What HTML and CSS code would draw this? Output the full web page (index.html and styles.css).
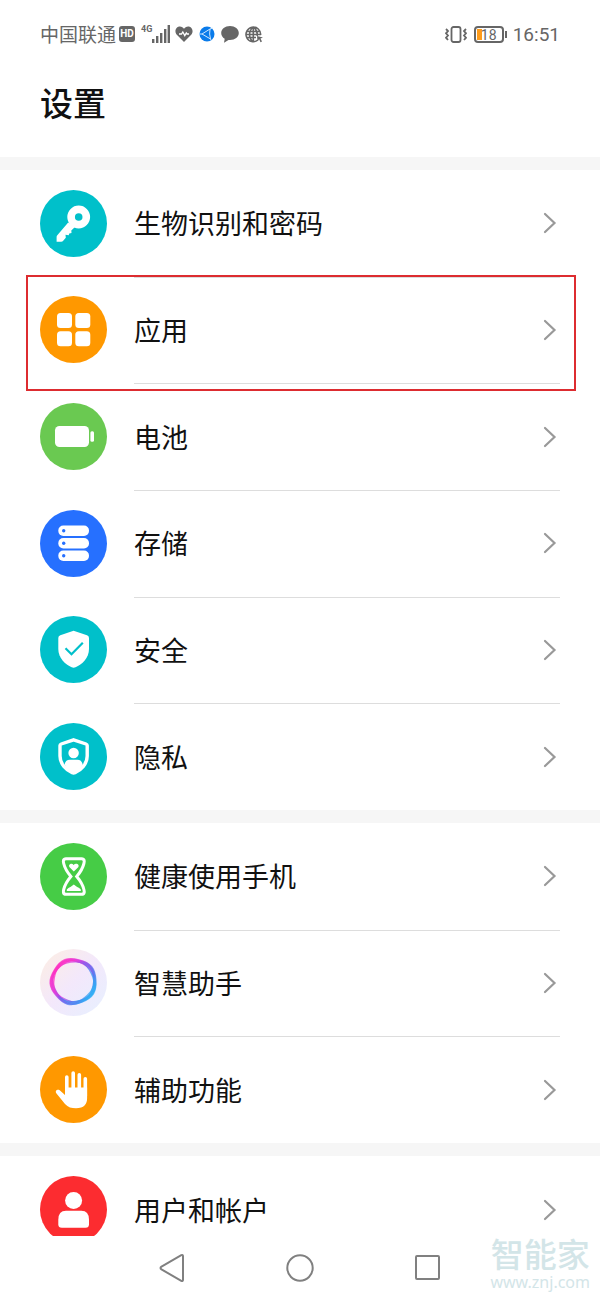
FILE: index.html
```
<!DOCTYPE html>
<html lang="zh-CN">
<head>
  <meta charset="UTF-8">
  <meta name="viewport" content="width=device-width, initial-scale=1">
  <title>设置</title>
  <link rel="stylesheet" href="styles.css">
</head>
<body>

  <svg class="defs" aria-hidden="true">
    <symbol id="chevron" viewBox="0 0 14 24">
      <path d="M2 3l9.500 9L2 21" fill="none" stroke="#999" stroke-width="2.200" stroke-linecap="round"/>
    </symbol>
  </svg>

  <div class="status-bar">
    <span class="carrier">中国联通</span>
    <span class="hd">HD</span>
    <span class="signal">
      <span class="network">4G</span>
      <svg width="18" height="18" viewBox="0 0 18 18" fill="#666">
        <path d="M0 14h2.400v4H0zM4 11h2.400v7H4zM8 8h2.400v10H8zM12 4h2.400v14H12zM15.600 0H18v18h-2.400z"/>
      </svg>
    </span>
    <svg class="heart" width="18" height="16" viewBox="0 0 18 16">
      <path d="M9 16L1.800 8.800C-1 5.600.8.500 4.800.5 6.800.5 8.200 1.500 9 2.800 9.800 1.500 11.200.5 13.200.5c4 0 5.800 5.100 3 8.300z" fill="#666"/>
      <path d="M4 8h2.500l1.300-2 2 3.600L11.300 7l.8 1H14" fill="none" stroke="#fff" stroke-width="1.300"/>
    </svg>
    <svg class="browser" width="16" height="16" viewBox="0 0 16 16">
      <circle cx="8" cy="8" r="7.500" fill="#0a7bea"/>
      <path d="M3 8l8-5q-1 5 .5 10zM11 3l2.500-1M11.500 13l1 1.500M3 8H.5" fill="none" stroke="#cfe8ff" stroke-width="1"/>
    </svg>
    <svg class="bubble" width="18" height="17" viewBox="0 0 18 17">
      <path d="M9 0c5 0 8.800 3 8.800 7S14 14 9 14l-1.500-.1L3 16.800l.7-4C1.500 11.500.2 9.500.2 7 .2 3 4 0 9 0z" fill="#666"/>
    </svg>
    <svg class="globe" width="18" height="17" viewBox="0 0 18 17" fill="none" stroke="#666" stroke-width="1.600">
      <path d="M13 14A7.300 7.300 0 1 1 15.600 9M8.300 1v15M1 5.500h14.200M1 11.500h10M.5 8.500H16M8.300 1c-5 4-5 11 0 15M8.300 1c3.500 3 4.500 6 3.800 9"/>
      <path d="M12 10l6 1.500-2.500 1 1.500 3-1.500.8-1.300-3-1.700 1.700z" fill="#666" stroke="none"/>
    </svg>
    <span class="spacer"></span>
    <svg class="vibrate" width="22" height="17" viewBox="0 0 22 17" fill="none" stroke="#666" stroke-width="1.800">
      <rect x="6.500" y="1" width="9" height="15" rx="2"/>
      <path d="M1 3l2 2-2 2.300 2 2.200-2 2.200 2 2.300M21 3l-2 2 2 2.300-2 2.200 2 2.200-2 2.300"/>
    </svg>
    <span class="battery">18</span>
    <time class="clock">16:51</time>
  </div>

  <header>
    <h1>设置</h1>
  </header>

  <main>
    <nav class="group">
      <a class="row" href="#biometrics">
        <svg class="icon" viewBox="0 0 67 67">
          <circle cx="33.500" cy="33.500" r="33.500" fill="#00c0ca"/>
          <circle cx="38.700" cy="27" r="7.600" fill="none" stroke="#fff" stroke-width="7.600"/>
          <path d="M28.200 32.500L17.300 45.200q-.7.700-.7 1.800v4.700h4.600q1.300 0 2-1l2.600-3-.3-3 3.200.5.600-1.800 2.200-.4-.2-2.500 4.200-4z" fill="#fff"/>
        </svg>
        <span class="label">生物识别和密码</span>
        <svg class="chevron"><use href="#chevron"/></svg>
      </a>
      <a class="row highlighted" href="#apps">
        <svg class="icon" viewBox="0 0 67 67">
          <circle cx="33.500" cy="33.500" r="33.500" fill="#ff9800"/>
          <g fill="#fff">
            <rect x="17" y="17" width="15" height="15" rx="3.500"/>
            <rect x="35.300" y="17" width="15" height="15" rx="3.500"/>
            <rect x="17" y="35.300" width="15" height="15" rx="3.500"/>
            <rect x="35.300" y="35.300" width="15" height="15" rx="3.500"/>
          </g>
        </svg>
        <span class="label">应用</span>
        <svg class="chevron"><use href="#chevron"/></svg>
      </a>
      <a class="row" href="#battery">
        <svg class="icon" viewBox="0 0 67 67">
          <circle cx="33.500" cy="33.500" r="33.500" fill="#6ac951"/>
          <rect x="15" y="23" width="34" height="21" rx="4.500" fill="#fff"/>
          <rect x="50.400" y="28.300" width="3.600" height="10.500" rx="1.500" fill="#fff"/>
        </svg>
        <span class="label">电池</span>
        <svg class="chevron"><use href="#chevron"/></svg>
      </a>
      <a class="row" href="#storage">
        <svg class="icon" viewBox="0 0 67 67">
          <circle cx="33.500" cy="33.500" r="33.500" fill="#2670ff"/>
          <g fill="#fff">
            <rect x="18.300" y="15.600" width="30.700" height="10.400" rx="5"/>
            <rect x="18.300" y="28.100" width="30.700" height="10.400" rx="5"/>
            <rect x="18.300" y="40.600" width="30.700" height="10.400" rx="5"/>
          </g>
          <g fill="#2670ff">
            <circle cx="23.700" cy="20.800" r="1.700"/>
            <circle cx="23.700" cy="33.300" r="1.700"/>
            <circle cx="23.700" cy="45.800" r="1.700"/>
          </g>
        </svg>
        <span class="label">存储</span>
        <svg class="chevron"><use href="#chevron"/></svg>
      </a>
      <a class="row" href="#security">
        <svg class="icon" viewBox="0 0 67 67">
          <circle cx="33.500" cy="33.500" r="33.500" fill="#00c0ca"/>
          <path d="M33.600 14.800L47 19.200q2 .7 2 2.800v11c0 9-7 15.500-13.500 18.300q-1.900.8-3.800 0C25.300 48.500 18.300 42 18.300 33V22q0-2.100 2-2.800z" fill="#fff"/>
          <path d="M25.500 32.300l6 6 11.300-11.500" fill="none" stroke="#00c0ca" stroke-width="2.200"/>
        </svg>
        <span class="label">安全</span>
        <svg class="chevron"><use href="#chevron"/></svg>
      </a>
      <a class="row" href="#privacy">
        <svg class="icon" viewBox="0 0 67 67">
          <circle cx="33.500" cy="33.500" r="33.500" fill="#00c0ca"/>
          <path d="M33.600 16.800L46 21q1.200.4 1.200 1.600V33c0 8-6.200 14-12.200 16.700q-1.400.6-2.800 0C26.200 47 20 41 20 33V22.600q0-1.200 1.200-1.600z" fill="none" stroke="#fff" stroke-width="3.400"/>
          <circle cx="33.600" cy="30" r="5.200" fill="#fff"/>
          <path d="M24.500 41.500q1-4.800 5.300-4.800h7.600q4.300 0 5.300 4.800-3.300 6-9.100 8.700-5.800-2.700-9.100-8.700z" fill="#fff"/>
        </svg>
        <span class="label">隐私</span>
        <svg class="chevron"><use href="#chevron"/></svg>
      </a>
    </nav>

    <nav class="group">
      <a class="row" href="#balance">
        <svg class="icon" viewBox="0 0 67 67">
          <circle cx="33.500" cy="33.500" r="33.500" fill="#46cc46"/>
          <path d="M26 15.700h15.600c3 0 2.900 2.500 2.300 4.800-1.200 5-4.200 9.500-7.200 13 3 3.500 6 8 7.200 13 .6 2.300.7 4.800-2.300 4.800H26c-3 0-2.900-2.500-2.300-4.800 1.200-5 4.200-9.500 7.200-13-3-3.500-6-8-7.200-13-.6-2.300-.7-4.800 2.300-4.800z" fill="none" stroke="#fff" stroke-width="3"/>
          <path d="M33.800 28.500l-4.200-4.200c-2-2.500 2-5 4-2.400 2.200-2.600 6.500-.4 4.600 2.300zM26.800 48v-1.500q1.200-1.800 4-2.800l3-2.200 3 2.200q2.800 1 4 2.800V48z" fill="#fff"/>
        </svg>
        <span class="label">健康使用手机</span>
        <svg class="chevron"><use href="#chevron"/></svg>
      </a>
      <a class="row" href="#assistant">
        <svg class="icon" viewBox="0 0 67 67">
          <defs>
            <linearGradient id="disc" x1="0" y1="0" x2="1" y2="1">
              <stop offset="0" stop-color="#fdeee2"/>
              <stop offset=".5" stop-color="#f3e8fb"/>
              <stop offset="1" stop-color="#e6f0ff"/>
            </linearGradient>
            <linearGradient id="ring" x1="0.100" y1="0.200" x2="0.900" y2="0.900">
              <stop offset="0" stop-color="#ff2fc0"/>
              <stop offset=".3" stop-color="#dd3be0"/>
              <stop offset=".58" stop-color="#6a63ee"/>
              <stop offset="1" stop-color="#22b4f5"/>
            </linearGradient>
            <path id="loop" d="M5.100-20.400C16.200-17.600 20.200-12.900 21-1.500 21.800 10 18.500 15.200 7.900 19.500-2.800 23.800-8.800 22.300-16.100 13.500-23.500 4.700-23.900-1.500-17.800-11.200-11.700-20.900-6-23.200 5.100-20.400z"/>
          </defs>
          <circle cx="33.500" cy="33.500" r="33.500" fill="url(#disc)"/>
          <g fill="none" stroke="url(#ring)" stroke-width="1.400" stroke-opacity=".75" transform="translate(33.500 32.500)">
            <use href="#loop" transform="scale(1.060)"/>
            <use href="#loop" transform="rotate(7) scale(1.020)"/>
            <use href="#loop" transform="rotate(-8) scale(1.030)"/>
            <use href="#loop" transform="rotate(-14) scale(.98)"/>
            <use href="#loop" transform="rotate(4) scale(.97)"/>
            <use href="#loop" transform="rotate(16) scale(.95)"/>
            <use href="#loop" transform="rotate(-22) scale(.93)"/>
          </g>
        </svg>
        <span class="label">智慧助手</span>
        <svg class="chevron"><use href="#chevron"/></svg>
      </a>
      <a class="row" href="#accessibility">
        <svg class="icon" viewBox="0 0 67 67">
          <circle cx="33.500" cy="33.500" r="33.500" fill="#ff9800"/>
          <path d="M26.800 21v20M33.200 17v22M39.300 18.700V39M45.300 22.800V40" fill="none" stroke="#fff" stroke-width="3.600" stroke-linecap="round"/>
          <path d="M25 39l-5.300-4.700c-2.200-1.500-5 .5-3.400 2.900L25 48c3 3.400 6.500 4.300 11 4.300 8 0 11.100-4 11.100-10V31.500H25z" fill="#fff"/>
        </svg>
        <span class="label">辅助功能</span>
        <svg class="chevron"><use href="#chevron"/></svg>
      </a>
    </nav>

    <nav class="group">
      <a class="row" href="#accounts">
        <svg class="icon" viewBox="0 0 67 67">
          <circle cx="33.500" cy="33.500" r="33.500" fill="#fc2c30"/>
          <circle cx="33.600" cy="24.500" r="8.500" fill="#fff"/>
          <path d="M26 34.700h15.300q7.700 0 7.700 9v4.500q0 3.500-3.500 3.500H21.800q-3.500 0-3.500-3.500v-4.500q0-9 7.700-9z" fill="#fff"/>
        </svg>
        <span class="label">用户和帐户</span>
        <svg class="chevron"><use href="#chevron"/></svg>
      </a>
    </nav>
  </main>

  <footer>
    <button type="button" aria-label="返回">
      <svg width="28" height="30" viewBox="0 0 28 30"><path d="M3.500 13.600L23.300 2.200q1.700-.9 1.700 1v23.600q0 1.900-1.700 1L3.500 16.400q-2-1.400 0-2.800z"/></svg>
    </button>
    <button type="button" aria-label="主页">
      <svg width="28" height="28" viewBox="0 0 28 28"><circle cx="14" cy="14" r="12.700"/></svg>
    </button>
    <button type="button" aria-label="最近任务">
      <svg width="28" height="28" viewBox="0 0 28 28"><rect x="2" y="2" width="23" height="23" rx="1"/></svg>
    </button>
    <div class="watermark">
      <span class="brand">智能家</span>
      <span class="site">www.znj.com</span>
    </div>
  </footer>

</body>
</html>
```
FILE: styles.css
```
* {
  box-sizing: border-box;
}

body {
  display: flex;
  flex-direction: column;
  height: 100vh;
  margin: 0;
  background-color: #fff;
  color: #111;
  font-family: Roboto, "Noto Sans CJK SC", sans-serif;
}

svg {
  display: block;
  flex: none;
}

.defs {
  position: absolute;
  width: 0;
  height: 0;
}

/* status bar */
.status-bar {
  display: flex;
  align-items: center;
  flex: none;
  height: 68px;
  padding: 0 40px;
  color: #666;
}

.carrier {
  padding-top: 4px;
  font-size: 19px;
  line-height: 24px;
}

.hd {
  width: 16px;
  margin-left: 3px;
  border-radius: 3px;
  background-color: #666;
  color: #fff;
  font-size: 10px;
  font-weight: bold;
  line-height: 16px;
  text-align: center;
}

.signal {
  display: flex;
  align-items: flex-start;
  margin-left: 6px;
}

.network {
  font-size: 9px;
  font-weight: bold;
  line-height: 9px;
}

.heart {
  margin-left: 5px;
}

.browser {
  margin-left: 6px;
}

.bubble {
  margin-left: 6px;
}

.globe {
  margin-left: 6px;
}

.spacer {
  flex: 1;
}

.battery {
  position: relative;
  width: 30px;
  height: 17px;
  margin: 0 9px 0 7px;
  border: 2px solid #666;
  border-radius: 4px;
  background: linear-gradient(#ff9c1a, #ff9c1a) 1px 1px / 5px 11px no-repeat;
  font-size: 14px;
  line-height: 14px;
  text-align: center;
}

.battery::after {
  content: "";
  position: absolute;
  top: 3px;
  right: -5px;
  width: 2px;
  height: 7px;
  background-color: #666;
}

.clock {
  padding-top: 2px;
  font-size: 19px;
  line-height: 24px;
}

/* title */
header {
  flex: none;
  padding: 13px 40px 28px;
}

h1 {
  margin: 0;
  font-size: 33px;
  font-weight: 500;
  line-height: 48px;
}

/* settings list */
main {
  flex: 1;
  min-height: 0;
  overflow: hidden;
}

.group {
  display: grid;
  grid-auto-rows: 1fr;
  border-top: 13px solid #f6f6f6;
}

.group:nth-child(1) {
  min-height: 653px;
}

.group:nth-child(2) {
  min-height: 333px;
}

.group:nth-child(3) {
  min-height: 120px;
}

.row {
  position: relative;
  display: flex;
  align-items: center;
  padding: 0 40px;
  color: inherit;
  text-decoration: none;
}

.icon {
  width: 67px;
  height: 67px;
  margin-right: 27px;
}

.label {
  flex: 1;
  padding-top: 4px;
  font-size: 27px;
  line-height: 40px;
}

.chevron {
  width: 14px;
  height: 24px;
  margin-right: 3px;
}

.row:not(:last-child)::before {
  content: "";
  position: absolute;
  right: 40px;
  bottom: -1px;
  left: 134px;
  height: 1px;
  background-color: #ddd;
}

.highlighted::after {
  content: "";
  position: absolute;
  inset: -2px 24px -8px 26px;
  border: 2px solid #dd2c30;
}

/* navigation keys */
footer {
  position: relative;
  display: flex;
  align-items: center;
  justify-content: center;
  flex: none;
  height: 64px;
}

button {
  display: flex;
  align-items: center;
  justify-content: center;
  width: 128px;
  height: 64px;
  padding: 0;
  border: 0;
  background: none;
}

button svg {
  fill: none;
  stroke: #808080;
  stroke-width: 2;
}

.watermark {
  position: absolute;
  right: 10px;
  bottom: 9px;
  display: flex;
  flex-direction: column;
  align-items: center;
  color: #d3e5e8;
}

.brand {
  font-size: 33px;
  font-weight: 500;
  line-height: 34px;
}

.site {
  font-family: "Noto Sans", sans-serif;
  font-size: 16px;
  line-height: 18px;
}
```
